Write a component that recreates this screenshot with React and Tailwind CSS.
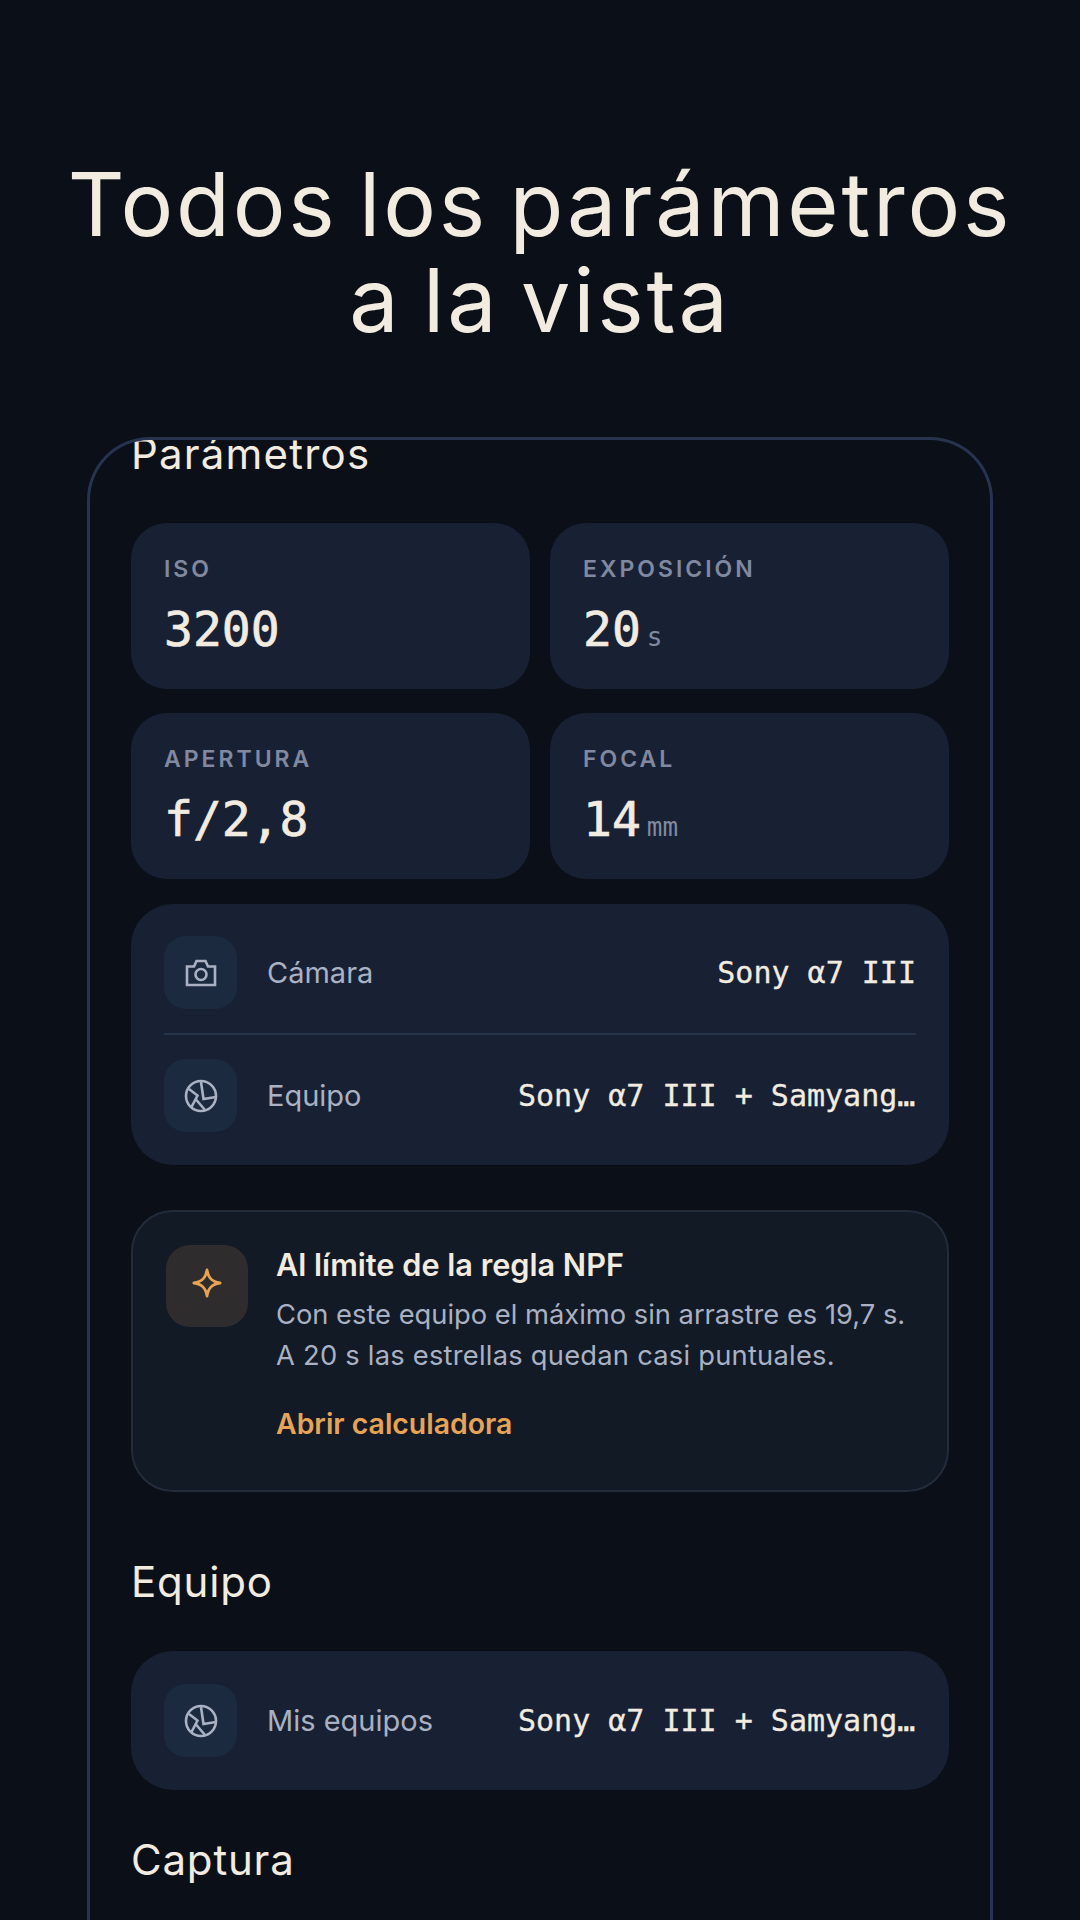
import React from 'react';

function CameraIcon() {
  return (
    <svg width="32" height="28" viewBox="0 0 32 28" fill="none" stroke="#a9b1c2" strokeWidth="2.6">
      <path d="M2 7.500h7l2.500-5.500h9L23 7.500h7V26H2z" />
      <circle cx="16" cy="15.500" r="5.500" />
    </svg>
  );
}

function ApertureIcon() {
  return (
    <svg width="34" height="34" viewBox="0 0 34 34" fill="none" stroke="#a9b1c2" strokeWidth="2.600">
      <circle cx="17" cy="17" r="15" />
      <path d="M17 3l2.500 17L32 18M5 10l8.500 6.500L7.500 28M12 20.500L21 31" />
    </svg>
  );
}

function Stat({ label, value, unit }) {
  return (
    <div className="h-[166px] rounded-[36px] bg-[#182133] pl-[33px] pt-[32px]">
      <div className="text-[23px] leading-[28px] font-semibold tracking-[0.13em] text-[#8089a0]">{label}</div>
      <div className="mt-[14px] flex items-baseline gap-[6px] font-['DejaVu_Sans_Mono',monospace] text-[48px] leading-[64px] text-[#f2ece0]">
        <span className="[-webkit-text-stroke:0.7px_#f2ece0]">{value}</span>
        {unit && <span className="text-[26px] text-[#8089a0]">{unit}</span>}
      </div>
    </div>
  );
}

function Row({ icon, label, value }) {
  return (
    <div className="flex items-center">
      <div className="flex h-[73px] w-[73px] shrink-0 items-center justify-center rounded-[22px] bg-[#1c2a40]">{icon}</div>
      <div className="ml-[30px] text-[29px] text-[#a9b1c2]">{label}</div>
      <div className="ml-auto w-[398px] truncate text-right font-['DejaVu_Sans_Mono',monospace] text-[30px] text-[#f2ece0] [-webkit-text-stroke:0.3px_#f2ece0]">{value}</div>
    </div>
  );
}

const gear = 'Sony α7 III + Samyang AF 14mm F2.8';

export default function App() {
  return (
    <div className="h-[1920px] overflow-hidden bg-[#0b1018] font-['Inter',sans-serif]">
      <h1 className="pt-[156px] text-center text-[88px] leading-[96px] font-normal tracking-[2.8px] [word-spacing:-6px] text-[#f2ece0]">
        Todos los parámetros
        <br />a la vista
      </h1>

      <div className="mx-[87px] mt-[89px] h-[1500px] overflow-hidden rounded-t-[63px] border-x-[3px] border-t-[3px] border-[#26344f]">
        <div className="-mt-[12px] px-[41px]">
          <h2 className="text-[42px] leading-[52px] tracking-[1.2px] text-[#f2ece0]">Parámetros</h2>

          <div className="mt-[43px] grid grid-cols-2 gap-x-[20px] gap-y-[24px]">
            <Stat label="ISO" value="3200" />
            <Stat label="EXPOSICIÓN" value="20" unit="s" />
            <Stat label="APERTURA" value="f/2,8" />
            <Stat label="FOCAL" value="14" unit="mm" />
          </div>

          <div className="mt-[25px] rounded-[42px] bg-[#182133] px-[33px] pt-[32px] pb-[33px]">
            <Row icon={<CameraIcon />} label="Cámara" value="Sony α7 III" />
            <div className="mt-[24px] mb-[24px] h-[2px] bg-[#26344a]" />
            <Row icon={<ApertureIcon />} label="Equipo" value={gear} />
          </div>

          <div className="mt-[45px] flex h-[282px] gap-[28px] rounded-[42px] border-2 border-[#232c3b] bg-[#121a26] pt-[33px] pl-[33px]">
            <div className="flex h-[82px] w-[82px] shrink-0 items-center justify-center rounded-[24px] bg-[#2e2c2d]">
              <svg className="-translate-y-[3px]" width="30" height="30" viewBox="0 0 32 32" fill="none" stroke="#e8a452" strokeWidth="3" strokeLinejoin="round">
                <path d="M16 2c1.200 8.500 5 12.800 14 14-9 1.200-12.800 5.500-14 14-1.200-8.500-5-12.800-14-14 9-1.200 12.800-5.500 14-14z" />
              </svg>
            </div>
            <div>
              <div className="text-[30.700px] leading-[40px] font-semibold text-[#f2ece0]">Al límite de la regla NPF</div>
              <p className="mt-[9px] text-[27.300px] leading-[41px] text-[#a9b1c2]">
                Con este equipo el máximo sin arrastre es 19,7 s.
                <br />
                <span className="tracking-[0.24px]">A 20 s las estrellas quedan casi puntuales.</span>
              </p>
              <div className="mt-[28px] text-[28.400px] leading-[40px] font-semibold text-[#e8a452]">Abrir calculadora</div>
            </div>
          </div>

          <h2 className="mt-[64px] text-[42px] leading-[52px] tracking-[0.8px] text-[#f2ece0]">Equipo</h2>

          <div className="mt-[43px] rounded-[42px] bg-[#182133] px-[33px] py-[33px]">
            <Row icon={<ApertureIcon />} label="Mis equipos" value={gear} />
          </div>

          <h2 className="mt-[44px] text-[42px] leading-[52px] tracking-[0.8px] text-[#f2ece0]">Captura</h2>
        </div>
      </div>
    </div>
  );
}
